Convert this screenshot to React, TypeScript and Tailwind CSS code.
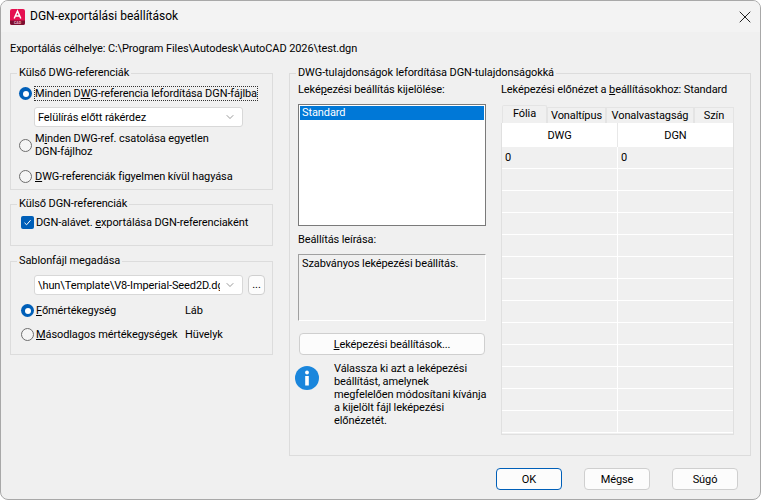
import { ReactNode } from "react";
import { ChevronDown, X } from "lucide-react";

// Group box with its caption sitting on the top border
function Group({ title, className, children }: { title: string; className: string; children: ReactNode }) {
  return (
    <div className={`relative border border-[#dcdcdc] ${className}`}>
      <span className="absolute left-[6px] top-[-8px] bg-[#f0f0f0] px-[2px] leading-[14px] whitespace-nowrap">{title}</span>
      {children}
    </div>
  );
}

function Radio({ checked }: { checked?: boolean }) {
  if (checked) {
    return (
      <span className="flex h-[13px] w-[13px] shrink-0 items-center justify-center rounded-full bg-[#005fb8]">
        <span className="h-[6px] w-[6px] rounded-full bg-white" />
      </span>
    );
  }
  return <span className="h-[13px] w-[13px] shrink-0 rounded-full border border-[#6e6e6e] bg-[#f5f5f5]" />;
}

function Combo({ children }: { children: ReactNode }) {
  return (
    <div className="flex h-[20px] w-[209px] items-center rounded-[3px] border border-[#d8d8d8] bg-white pl-[3px] pr-[6px]">
      <span className="min-w-0 flex-1 overflow-hidden whitespace-nowrap">{children}</span>
      <ChevronDown size={12} strokeWidth={1.2} className="ml-[4px] shrink-0 text-[#555]" />
    </div>
  );
}

function Button({ children, primary, className }: { children: ReactNode; primary?: boolean; className?: string }) {
  return (
    <div className={`flex items-center justify-center rounded-[4px] border bg-[#fcfcfc] ${primary ? "border-[#005fb8]" : "border-[#cfcfcf]"} ${className ?? ""}`}>
      {children}
    </div>
  );
}

const rows = [0, 1, 2, 3, 4, 5, 6, 7, 8, 9, 10, 11, 12];

export default function App() {
  return (
    <div className="flex h-[500px] w-[761px] flex-col overflow-hidden rounded-[8px] border border-[#a8a8a8] bg-[#f0f0f0] text-[11px] leading-[13px] tracking-[-0.1px] text-black [font-family:Roboto,sans-serif]">
      {/* title bar */}
      <div className="flex h-[31px] shrink-0 items-center bg-[#f3f3f3] pl-[9px] pr-[5px]">
        <svg width="15" height="16" viewBox="0 0 15 16" className="shrink-0">
          <rect x="0" y="0" width="15" height="16" rx="2" fill="#e51050" />
          <path d="M0 11.5H15V14a2 2 0 0 1-2 2H2a2 2 0 0 1-2-2Z" fill="#7a1030" />
          <path d="M4.2 9.5 7.5 2l3.3 7.5M5.4 7h4.2" fill="none" stroke="#fff" strokeWidth="1.5" />
          <text x="7.5" y="15.2" textAnchor="middle" fontSize="3.6" fill="#f3b5c8" fontWeight="700">CAD</text>
        </svg>
        <span className="ml-[5px] flex-1 text-[12px] tracking-normal">DGN-exportálási beállítások</span>
        <X size={20} strokeWidth={1.2} className="text-[#222]" />
      </div>

      {/* target path */}
      <div className="mt-[10px] h-[14px] pl-[9px] leading-[14px] whitespace-nowrap">
        Exportálás célhelye: C:\Program Files\Autodesk\AutoCAD 2026\test.dgn
      </div>

      <div className="mt-[17px] flex items-start pl-[9px]">
        {/* left column */}
        <div className="flex w-[263px] flex-col">
          <Group title="Külső DWG-referenciák" className="h-[117px] pl-[8px] pt-[12px]">
            <div className="flex items-center">
              <Radio checked />
              <span className="ml-[2px] border border-dotted border-[#333] leading-[13px] whitespace-nowrap">
                Minden D<u>W</u>G-referencia lefordítása DGN-fájlba
              </span>
            </div>
            <div className="ml-[15px] mt-[6px]">
              <Combo>Felülírás előtt rákérdez</Combo>
            </div>
            <div className="mt-[5px] flex items-center">
              <Radio />
              <span className="ml-[3px] leading-[13px]">
                M<u>i</u>nden DWG-ref. csatolása egyetlen
                <br />
                DGN-fájlhoz
              </span>
            </div>
            <div className="mt-[12px] flex items-center">
              <Radio />
              <span className="ml-[3px] whitespace-nowrap">
                <u>D</u>WG-referenciák figyelmen kívül hagyása
              </span>
            </div>
          </Group>

          <Group title="Külső DGN-referenciák" className="mt-[14px] h-[42px] pl-[10px] pt-[11px]">
            <div className="flex items-center">
              <span className="flex h-[13px] w-[13px] shrink-0 items-center justify-center rounded-[2px] bg-[#005fb8]">
                <svg width="9" height="9" viewBox="0 0 9 9">
                  <path d="M1.5 4.8 3.6 6.8 7.6 2.2" fill="none" stroke="#fff" strokeWidth="1" />
                </svg>
              </span>
              <span className="ml-[2px] whitespace-nowrap">
                DGN-alávet. <u>e</u>xportálása DGN-referenciaként
              </span>
            </div>
          </Group>

          <Group title="Sablonfájl megadása" className="mt-[15px] h-[94px] pl-[23px] pt-[13px]">
            <div className="flex items-center">
              <Combo>\hun\Template\V8-Imperial-Seed2D.dgn</Combo>
              <Button className="ml-[5px] h-[20px] w-[17px] pb-[2px]">...</Button>
            </div>
            <div className="-ml-[13px] mt-[9px] flex items-center">
              <Radio checked />
              <span className="ml-[2px] w-[149px]">
                <u>F</u>őmértékegység
              </span>
              <span>Láb</span>
            </div>
            <div className="-ml-[13px] mt-[11px] flex items-center">
              <Radio />
              <span className="ml-[2px] w-[149px] whitespace-nowrap">
                <u>M</u>ásodlagos mértékegységek
              </span>
              <span>Hüvelyk</span>
            </div>
          </Group>
        </div>

        {/* right group */}
        <Group title="DWG-tulajdonságok lefordítása DGN-tulajdonságokká" className="ml-[16px] flex h-[383px] w-[462px] pl-[8px] pt-[9px]">
          <div className="flex w-[203px] flex-col">
            <div className="h-[14px] leading-[14px]">
              Leké<u>p</u>ezési beállítás kijelölése:
            </div>
            <div className="mt-[7px] h-[122px] w-[188px] border border-[#7a7a7a] bg-white p-[1px]">
              <div className="bg-[#0078d7] pl-[2px] leading-[14px] text-white">Standard</div>
            </div>
            <div className="mt-[7px] h-[14px] leading-[14px]">Beállítás leírása:</div>
            <div className="mt-[7px] h-[67px] w-[188px] border border-b-white border-l-[#a0a0a0] border-r-white border-t-[#a0a0a0] pl-[3px] pt-[2px] leading-[13px]">
              Szabványos leképezési beállítás.
            </div>
            <Button className="ml-[1px] mt-[12px] h-[22px] w-[186px]">
              <span>
                <u>L</u>eképezési beállítások...
              </span>
            </Button>
            <div className="-ml-[3px] mt-[7px] flex">
              <svg width="24" height="24" viewBox="0 0 24 24" className="mt-[4px] shrink-0">
                <circle cx="12" cy="12" r="12" fill="#1a86dc" />
                <circle cx="12" cy="6.5" r="1.9" fill="#fff" />
                <rect x="10.2" y="10" width="3.6" height="9.5" fill="#fff" />
              </svg>
              <p className="ml-[15px] whitespace-nowrap">
                Válassza ki azt a leképezési
                <br />
                beállítást, amelynek
                <br />
                megfelelően módosítani kívánja
                <br />
                a kijelölt fájl leképezési
                <br />
                előnézetét.
              </p>
            </div>
          </div>

          <div className="flex w-[234px] flex-col">
            <div className="h-[14px] leading-[14px] whitespace-nowrap">
              Leképezési előnézet a <u>b</u>eállításokhoz: Standard
            </div>
            <div className="mt-[7px] flex h-[19px] items-end pl-[1px]">
              <div className="flex h-[18px] w-[45px] items-center justify-center rounded-t-[2px] border border-b-0 border-[#e4e4e4] bg-[#f0f0f0] pb-[2px]">Fólia</div>
              <div className="flex h-[16px] w-[59px] items-center justify-center border border-b-0 border-[#e4e4e4]">Vonaltípus</div>
              <div className="flex h-[16px] w-[88px] items-center justify-center border border-b-0 border-[#e4e4e4]">Vonalvastagság</div>
              <div className="flex h-[16px] w-[40px] items-center justify-center border border-b-0 border-[#e4e4e4]">Szín</div>
            </div>
            <div className="flex h-[312px] w-[233px] flex-col overflow-hidden border border-t-0 border-[#e0e0e0]">
              <div className="flex h-[24px] shrink-0 bg-white">
                <div className="flex w-[116px] items-center justify-center border-r border-[#e8e8e8]">DWG</div>
                <div className="flex flex-1 items-center justify-center">DGN</div>
              </div>
              {rows.map((r) => (
                <div key={r} className="flex h-[22px] shrink-0 border-b border-white">
                  <div className="flex w-[116px] items-center border-r border-white pl-[3px]">{r === 0 ? "0" : ""}</div>
                  <div className="flex flex-1 items-center pl-[3px]">{r === 0 ? "0" : ""}</div>
                </div>
              ))}
            </div>
          </div>
        </Group>
      </div>

      {/* dialog buttons */}
      <div className="mt-[12px] flex gap-[22px] pl-[495px]">
        <Button primary className="h-[22px] w-[66px]">OK</Button>
        <Button className="h-[22px] w-[66px]">Mégse</Button>
        <Button className="h-[22px] w-[66px]">Súgó</Button>
      </div>
    </div>
  );
}
